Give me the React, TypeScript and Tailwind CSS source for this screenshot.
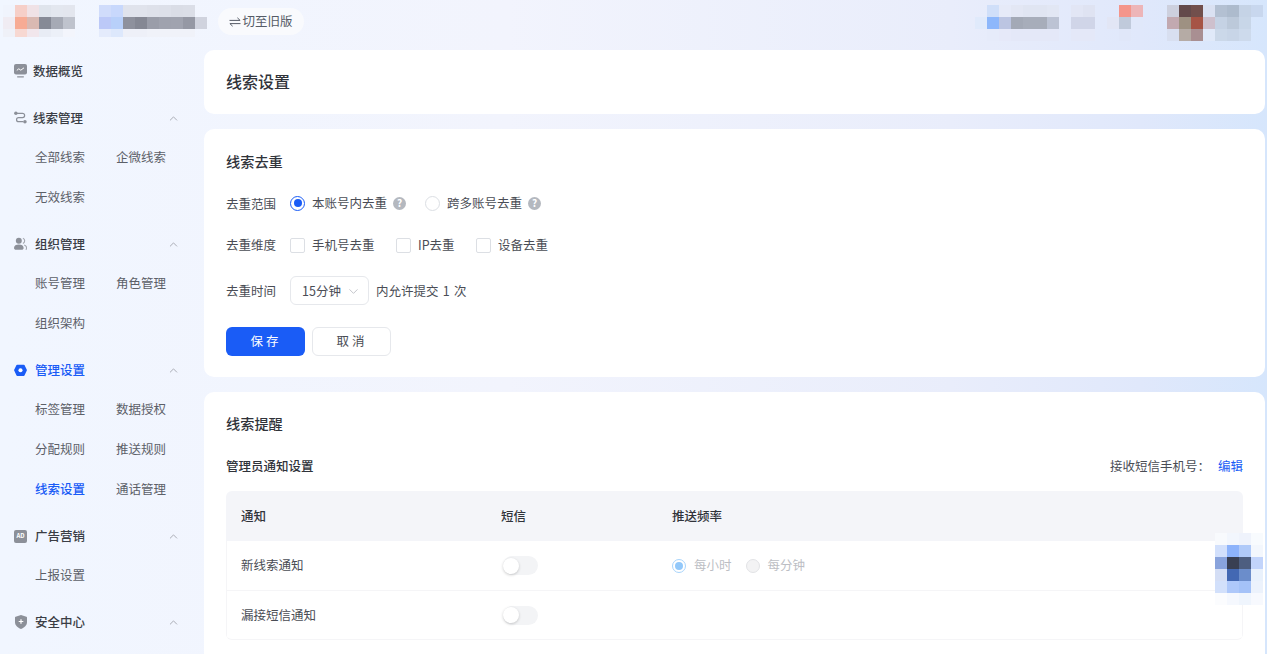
import { ChevronUp, ChevronDown } from 'lucide-react';

// blurred-out logos and account names from the header
const logoMosaic = [
  ['#f0f4fd', '#f6cfc8', '#f0e2e6', '#dfe4ec', '#e3e7ef', '#e3e6ee'],
  ['#f0ecf3', '#f7ab94', '#d9b9b2', '#868a96', '#a6aab5', '#bfc3cd'],
  ['#eff1f8', '#f7d8d2', '#f1e6ec', '#e8ecf5', '#ecf0f8', '#f3f5fc'],
];
const nameMosaic = [
  ['#d0dcfb', '#c8d8fc', '#e0e3ec', '#e0e3ec', '#dee1ea', '#dde0e9', '#dadde6', '#dbdee7', ''],
  ['#bcc9f8', '#b8d0fa', '#8e919d', '#858894', '#9a9da9', '#9fa2ae', '#a0a3af', '#9598a4', '#d0d3de'],
  ['#e4ebfc', '#dde8fc', '#eef0f8', '#eef0f8', '#f0f2f9', '#f0f2f9', '#f0f2f9', '#f0f2f9', ''],
];
const accountMosaic = [
  ['', '#d0dff9', '#e6eaf8', '#e3e7f4', '#e0e5f2', '#e0e5f2', '#e2e7f4', '', '#e2e6f5', '#dfe3f2', '', '', '#f4958b', '#edb5b8', '', '', '#cdd0de', '#644a4b', '#724f4c', '#dae1f2', '#b3c0d2', '#adbbcd', '#c5d3e6', '#c8d7ee'],
  ['#e0eafb', '#8db7fb', '#bcc5e2', '#a3a9b6', '#a7adba', '#a7adba', '#bcc3d4', '', '#d0d5e8', '#d0d5e8', '', '#e2e6f5', '#c0cadb', '#e0e8fa', '', '', '#c2a9b0', '#9e9182', '#a65445', '#cec0cd', '#c5d2e4', '#bcc9da', '#c8d6e8', ''],
  ['', '#e6ebfa', '#e6e9f9', '#e4e8f8', '#e4e8f8', '#e4e8f8', '#e4e8f8', '', '#e4e8f8', '#e4e8f8', '', '', '#e0e7f9', '', '', '', '#d8dff0', '#b5aba5', '#a98f92', '#e0e9f9', '#cbd8e9', '#c8d5e7', '#cddaec', ''],
];
const floatMosaic = [
  ['', '#f8fafd', '#f2f6fd', '#eff3fc', '#f8fbfe'],
  ['', '#d2e0fc', '#8db3fb', '#b0caf9', '#f3f7fd'],
  ['', '#89a3dc', '#393f52', '#4d5e80', '#c2d4fb'],
  ['', '#d4def5', '#4368b3', '#6b8dcb', '#e9f1fc'],
  ['', '#d2e0fb', '#aec8fa', '#a4c2f8', '#ecf2fc'],
  ['', '#fbfcfe', '#f5f8fe', '#eff5fd', '#f7f9fe'],
];

function Mosaic({ rows, clip, className }: { rows: string[][]; clip?: number; className?: string }) {
  const w = rows[0].length * 12;
  const h = clip ?? rows.length * 12;
  return (
    <svg width={w} height={h} viewBox={`0 0 ${w} ${h}`} className={className} shapeRendering="crispEdges">
      {rows.map((row, y) =>
        row.map((c, x) => (c ? <rect key={`${x}-${y}`} x={x * 12} y={y * 12} width="12" height="12" fill={c} /> : null))
      )}
    </svg>
  );
}

const IconOverview = () => (
  <svg width="13" height="14" viewBox="0 0 13 14">
    <rect x="0" y="0" width="13" height="10.5" rx="2" fill="#8c9099" />
    <path d="M2.8 6.4 4.8 4.8l2 1.4 3.2-2.4" fill="none" stroke="#fff" strokeWidth="1" />
    <rect x="3" y="12.2" width="7" height="1.2" rx="0.6" fill="#8c9099" />
  </svg>
);
const IconRoute = () => (
  <svg width="14" height="14" viewBox="0 0 14 14" fill="none">
    <circle cx="2" cy="1.9" r="1.9" fill="#8c9099" />
    <circle cx="11.8" cy="11" r="1.9" fill="#8c9099" />
    <path d="M3 2h6.2a2.2 2.2 0 0 1 0 4.5H5a2.2 2.2 0 0 0 0 4.5h5" stroke="#8c9099" strokeWidth="1.3" />
  </svg>
);
const IconUsers = () => (
  <svg width="14" height="14" viewBox="0 0 14 14">
    <circle cx="5.2" cy="3.6" r="3.2" fill="#8c9099" />
    <path d="M0 11.4C0 8.8 2.3 7.6 5.2 7.6s5.2 1.2 5.2 3.8c0 1.4-1 1.9-2 1.9H2C1 13.3 0 12.8 0 11.4z" fill="#8c9099" />
    <path d="M9.6.8a3 3 0 0 1 0 5.6M11 8c1.6.5 2.6 1.6 2.6 3.2 0 .9-.4 1.5-1 1.8" fill="none" stroke="#a4a8b0" strokeWidth="1.2" />
  </svg>
);
const IconSettings = () => (
  <svg width="14" height="13" viewBox="0 0 14 13">
    <path d="M3.6.2h6.8a1 1 0 0 1 .9.5l2.5 4.9a1 1 0 0 1 0 .9l-2.5 5.3a1 1 0 0 1-.9.5H3.6a1 1 0 0 1-.9-.5L.2 6.5a1 1 0 0 1 0-.9L2.7.7a1 1 0 0 1 .9-.5z" fill="#1a5cf6" />
    <circle cx="7" cy="6.3" r="2.2" fill="#fff" />
  </svg>
);
const IconShield = () => (
  <svg width="12" height="14" viewBox="0 0 12 14">
    <path d="M6 0l5.4 1.8a.8.8 0 0 1 .6.8v4.6c0 3-2.6 5.4-6 6.8-3.4-1.4-6-3.8-6-6.8V2.6a.8.8 0 0 1 .6-.8z" fill="#8c9099" />
    <path d="M6 4.2v4.6M3.7 6.5h4.6" stroke="#fff" strokeWidth="1.2" />
  </svg>
);
const IconSwap = () => (
  <svg width="12" height="10" viewBox="0 0 12 10" fill="none" stroke="#555b66" strokeWidth="1">
    <path d="M0.5 3.4h10.6L8.4.8" />
    <path d="M11.5 6.6H.9l2.7 2.6" />
  </svg>
);
const Help = () => (
  <span className="flex h-[13px] w-[13px] items-center justify-center rounded-full bg-[#b4b8bf] text-[10px] leading-none font-bold text-white">?</span>
);

type Group = { label: string; icon: React.ReactNode; active?: boolean; items?: string[] };
const groups: Group[] = [
  { label: '线索管理', icon: <IconRoute />, items: ['全部线索', '企微线索', '无效线索'] },
  { label: '组织管理', icon: <IconUsers />, items: ['账号管理', '角色管理', '组织架构'] },
  { label: '管理设置', icon: <IconSettings />, active: true, items: ['标签管理', '数据授权', '分配规则', '推送规则', '线索设置', '通话管理'] },
  { label: '广告营销', icon: <span className="flex h-[13px] w-[13px] items-center justify-center rounded-[2px] bg-[#8c9099] text-[6px] leading-none font-bold text-white">AD</span>, items: ['上报设置'] },
  { label: '安全中心', icon: <IconShield /> },
];

function Sidebar() {
  return (
    <aside className="w-[204px] shrink-0 pl-[14px] pt-px text-[12.5px]">
      <div className="mb-[7px] flex h-10 items-center gap-[6px] font-medium text-[#3a3d45]">
        <IconOverview />
        <span>数据概览</span>
      </div>
      {groups.map((g, i) => (
        <div key={g.label} className="mb-[6px]">
          <div className={`flex h-10 items-center gap-2 pr-[24px] font-medium ${g.active ? 'text-[#1a5cf6]' : 'text-[#3a3d45]'}`}>
            <span className="flex w-[13px] justify-center">{g.icon}</span>
            <span className={i === 0 ? '-ml-[2px]' : ''}>{g.label}</span>
            <ChevronUp className="ml-auto h-[13px] w-[13px] text-[#9a9da5]" strokeWidth={1.5} />
          </div>
          {g.items && (
            <div className="grid grid-cols-[81px_81px] pl-[21px]">
              {g.items.map((item) => (
                <div key={item} className={`flex h-10 items-center pb-[2px] ${item === '线索设置' ? 'font-medium text-[#1a5cf6]' : 'text-[#5c6068]'}`}>{item}</div>
              ))}
            </div>
          )}
        </div>
      ))}
    </aside>
  );
}

const Radio = ({ on }: { on?: boolean }) => (
  <span className={`flex h-[15px] w-[15px] items-center justify-center rounded-full border bg-white ${on ? 'border-[#1a5cf6]' : 'border-[#dcdfe4]'}`}>
    {on && <span className="h-[8px] w-[8px] rounded-full bg-[#1a5cf6]" />}
  </span>
);
const Check = () => <span className="h-[15px] w-[15px] rounded-[2px] border border-[#dcdfe4] bg-white" />;
const Toggle = () => (
  <span className="ml-[2px] flex h-[19px] w-[35px] items-center rounded-full bg-[#f3f4f6]">
    <span className="h-[16px] w-[16px] rounded-full bg-white shadow-[0_1px_3px_rgba(0,0,0,0.2)]" />
  </span>
);

function DedupeCard() {
  return (
    <section className="h-[248px] shrink-0 rounded-[10px] bg-white px-[22px] pt-[21px] text-[12.5px] text-[#4a4d55]">
      <h2 className="h-[22px] text-[14.2px] leading-[22px] font-medium text-[#30333a]">线索去重</h2>
      <div className="mt-[19px] flex h-6 items-center">
        <span className="w-[64px] pt-[2px]">去重范围</span>
        <Radio on />
        <span className="ml-[7px] pt-[1px]">本账号内去重</span>
        <span className="ml-[6px]"><Help /></span>
        <span className="ml-[19px]"><Radio /></span>
        <span className="ml-[7px] pt-[1px]">跨多账号去重</span>
        <span className="ml-[6px]"><Help /></span>
      </div>
      <div className="mt-[18px] flex h-6 items-center">
        <span className="w-[64px]">去重维度</span>
        <Check />
        <span className="ml-[7px] w-[84px]">手机号去重</span>
        <Check />
        <span className="ml-[7px] w-[58px]">IP去重</span>
        <Check />
        <span className="ml-[7px]">设备去重</span>
      </div>
      <div className="mt-[19px] flex h-[29px] items-center">
        <span className="w-[64px] pt-[2px]">去重时间</span>
        <span className="flex h-[29px] w-[79px] items-center justify-between rounded-[6px] border border-[#e6e8ec] pt-[1px] pr-[7px] pl-[11px]">
          15分钟
          <ChevronDown className="h-[15px] w-[15px] text-[#b0b3ba]" strokeWidth={1.2} />
        </span>
        <span className="ml-[7px] pt-[2px] [word-spacing:1.5px]">内允许提交 1 次</span>
      </div>
      <div className="mt-[22px] flex gap-[7px]">
        <button className="h-[29px] w-[79px] rounded-[6px] bg-[#1a5cf6] pl-[1px] tracking-[3px] text-white">保存</button>
        <button className="h-[29px] w-[79px] rounded-[6px] border border-[#e6e8ec] bg-white pl-[1px] tracking-[3px] text-[#4a4d55]">取消</button>
      </div>
    </section>
  );
}

function NotifyCard() {
  return (
    <section className="flex-1 rounded-t-[10px] bg-white px-[22px] pt-[20px] text-[12.5px] text-[#4a4d55]">
      <h2 className="h-[22px] text-[14.2px] leading-[22px] font-medium text-[#30333a]">线索提醒</h2>
      <div className="mt-[21px] flex h-[22px] items-center justify-between">
        <span className="font-medium text-[#30333a]">管理员通知设置</span>
        <span>
          接收短信手机号：<span className="ml-[8px] text-[#1a5cf6]">编辑</span>
        </span>
      </div>
      <div className="mt-[14px] overflow-hidden rounded-[6px] border-b border-[#f5f5f7] text-[#4a4d55]">
        <div className="grid h-[50px] grid-cols-[260px_171px_1fr] items-center bg-[#f4f5f9] pl-[15px] font-medium text-[#30333a]">
          <span>通知</span>
          <span>短信</span>
          <span>推送频率</span>
        </div>
        <div className="grid h-[50px] grid-cols-[260px_171px_1fr] items-center border-x border-b border-[#f5f5f7] pl-[14px]">
          <span>新线索通知</span>
          <Toggle />
          <span className="flex items-center text-[#bcbec4]">
            <span className="flex h-[14px] w-[14px] items-center justify-center rounded-full border border-[#a8d4fb] bg-white">
              <span className="h-[8px] w-[8px] rounded-full bg-[#92c8fa]" />
            </span>
            <span className="ml-2">每小时</span>
            <span className="ml-[14px] h-[14px] w-[14px] rounded-full border border-[#e2e3e6] bg-[#f3f3f4]" />
            <span className="ml-2">每分钟</span>
          </span>
        </div>
        <div className="grid h-[48px] grid-cols-[260px_171px_1fr] items-center border-x border-[#f5f5f7] pl-[14px]">
          <span>漏接短信通知</span>
          <Toggle />
        </div>
      </div>
    </section>
  );
}

export default function App() {
  return (
    <div className="relative flex h-[654px] flex-col overflow-hidden bg-[linear-gradient(90deg,#f1f6ff_0%,#f2f4fd_40%,#e9edfb_75%,#e0e8fb_90%,#d6e6fc_100%)] font-['Noto_Sans_CJK_SC','Noto_Sans',sans-serif]">
      <header className="flex h-[50px] shrink-0 pt-[5px] pl-[3px]">
        <Mosaic rows={logoMosaic} clip={32} />
        <Mosaic rows={nameMosaic} clip={32} className="ml-[24px]" />
        <span className="mt-[3px] ml-[11px] flex h-[27px] w-[86px] items-center justify-center gap-px rounded-full bg-[#f9fafd] text-[12.5px] text-[#555b66]">
          <IconSwap />
          切至旧版
        </span>
        <Mosaic rows={accountMosaic} className="ml-auto mr-[4px]" />
      </header>
      <div className="flex min-h-0 flex-1">
        <Sidebar />
        <main className="flex min-w-0 flex-1 flex-col gap-[15px] pr-[2px]">
          <section className="flex h-[64px] shrink-0 items-center rounded-[10px] bg-white pb-[3px] pl-[22px] text-[16px] font-medium text-[#30333a]">线索设置</section>
          <DedupeCard />
          <NotifyCard />
        </main>
      </div>
      <Mosaic rows={floatMosaic} className="absolute top-[533px] left-[1203px]" />
    </div>
  );
}
